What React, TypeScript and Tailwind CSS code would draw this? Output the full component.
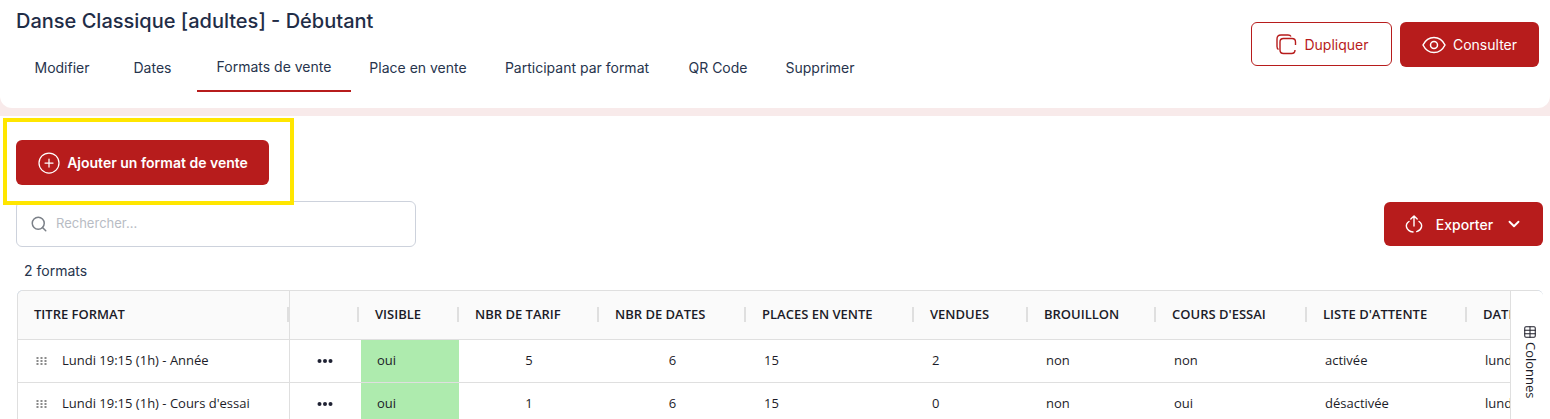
import { ChevronDown, CirclePlus, Search, Table } from "lucide-react";

const uiFont = "font-['Inter','Liberation_Sans',sans-serif]";
const tableFont = "font-['Open_Sans','Noto_Sans',sans-serif]";
const gridCols =
  "grid-cols-[272px_69px_100px_140px_147px_168px_114px_128px_151px_160px_120px]";

const tabs = [
  { label: "Modifier", width: "w-[92px]" },
  { label: "Dates", width: "w-[89px]" },
  { label: "Formats de vente", width: "w-[154px]", active: true },
  { label: "Place en vente", width: "w-[134px]" },
  { label: "Participant par format", width: "w-[184px]" },
  { label: "QR Code", width: "w-[98px]" },
  { label: "Supprimer", width: "w-[106px]" },
];

const headers = [
  "TITRE FORMAT",
  "",
  "VISIBLE",
  "NBR DE TARIF",
  "NBR DE DATES",
  "PLACES EN VENTE",
  "VENDUES",
  "BROUILLON",
  "COURS D'ESSAI",
  "LISTE D'ATTENTE",
  "DATE",
];

const rows = [
  {
    title: "Lundi 19:15 (1h) - Année",
    tarifs: "5",
    dates: "6",
    places: "15",
    vendues: "2",
    brouillon: "non",
    essai: "non",
    attente: "activée",
  },
  {
    title: "Lundi 19:15 (1h) - Cours d'essai",
    tarifs: "1",
    dates: "6",
    places: "15",
    vendues: "0",
    brouillon: "non",
    essai: "oui",
    attente: "désactivée",
  },
];

function DuplicateIcon() {
  return (
    <svg width="24" height="24" viewBox="0 0 24 24" fill="none" stroke="currentColor" strokeWidth="1.4">
      <path d="M4.5 17.5c-1-.6-1.5-1.6-1.5-3V7c0-2.500 1.500-4 4-4h7c1.500 0 2.500.5 3 1.500" />
      <path d="M18 6.500h-8.500c-2 0-3.500 1.500-3.500 3.500v8c0 2 1.500 3.500 3.500 3.500h8c2 0 3.500-1.500 3.500-3.500" />
      <path d="M18 6.500c2 0 3.500 1.500 3.500 3.500v3" />
    </svg>
  );
}

function EyeIcon() {
  return (
    <svg width="24" height="24" viewBox="0 0 24 24" fill="none" stroke="currentColor" strokeWidth="1.5">
      <path d="M1 12c2.500-5 6.500-7.500 11-7.500S20.500 7 23 12c-2.500 5-6.500 7.500-11 7.500S3.500 17 1 12z" />
      <circle cx="12" cy="12" r="3.500" />
    </svg>
  );
}

function ExportIcon() {
  return (
    <svg width="20" height="20" viewBox="0 0 20 20" fill="none" stroke="currentColor" strokeWidth="1.4" strokeLinecap="round">
      <path d="M10 12V2M6.800 5 10 2l3.200 3" />
      <path d="M5 7.500C2.800 9 2 11 2.500 13c.8 3 3.800 5 7.500 5s6.700-2 7.500-5c.5-2-.3-4-2.500-5.500" strokeDasharray="15 3.500" />
    </svg>
  );
}

function DragDots() {
  return (
    <svg width="12" height="8" viewBox="0 0 12 8" fill="#8a8a8a">
      {[1, 4, 7].map((y) =>
        [1.500, 5.500, 9.500].map((x) => <rect key={`${x}-${y}`} x={x} y={y - 1} width="2" height="2" />),
      )}
    </svg>
  );
}

function MoreDots() {
  return (
    <svg width="16" height="4" viewBox="0 0 16 4" fill="#1f2233">
      <circle cx="2.500" cy="2" r="2" />
      <circle cx="8" cy="2" r="2" />
      <circle cx="13.500" cy="2" r="2" />
    </svg>
  );
}

function Cell({ children, center }: { children: React.ReactNode; center?: boolean }) {
  return <div className={`flex items-center px-[18px] ${center ? "justify-center" : ""}`}>{children}</div>;
}

export default function App() {
  return (
    <div className={`relative h-[419px] w-[1550px] overflow-hidden bg-white ${uiFont}`}>
      <div className="bg-[#f8eaea] pb-2">
        <header className="flex h-[108px] justify-between rounded-b-xl bg-white pl-4 pr-[11px]">
          <div>
            <h1 className="mt-[9px] h-6 text-[20px] leading-6 font-medium text-[#1f2d47]">
              Danse Classique [adultes] - Débutant
            </h1>
            <nav className="mt-[10px] flex">
              {tabs.map((tab) => (
                <div
                  key={tab.label}
                  className={`flex h-[49px] items-center justify-center text-[14px] whitespace-nowrap text-[#27344d] ${tab.width} ${
                    tab.active ? "border-b-2 border-[#b71c1c]" : ""
                  }`}
                >
                  {tab.label}
                </div>
              ))}
            </nav>
          </div>
          <div className="mt-[22px] flex items-start gap-2">
            <button className="flex h-[44px] w-[141px] items-center justify-center gap-[6px] rounded-md border border-[#b71c1c] bg-white text-[14px] text-[#b71c1c]">
              <DuplicateIcon />
              Dupliquer
            </button>
            <button className="flex h-[45px] w-[139px] items-center justify-center gap-[7px] rounded-md bg-[#b71c1c] text-[14px] text-white">
              <EyeIcon />
              Consulter
            </button>
          </div>
        </header>
      </div>

      <main className="px-4 pt-6">
        <button className="flex h-[45px] w-[253px] items-center justify-center gap-[6px] rounded-md bg-[#b71c1c] text-[14px] font-semibold text-white">
          <CirclePlus size={24} strokeWidth={1.25} />
          Ajouter un format de vente
        </button>

        <div className="mt-4 flex items-center justify-between pr-[-1px]">
          <div className="flex h-[46px] w-[400px] items-center gap-2 rounded-md border border-[#cdd2dc] px-[13px]">
            <Search size={18} strokeWidth={2} className="text-[#7b8088]" />
            <span className="text-[13px] text-[#b8bcc4]">Rechercher...</span>
          </div>
          <button className="mr-[-9px] flex h-[44px] w-[159px] items-center justify-center gap-3 rounded-md bg-[#b71c1c] text-[14px] font-medium text-white">
            <ExportIcon />
            Exporter
            <ChevronDown size={18} strokeWidth={2.5} />
          </button>
        </div>

        <p className="mt-[14px] pl-2 text-[14px] leading-5 text-[#27344d]">2 formats</p>

        <div className={`mt-[9px] ml-px flex w-[1526px] rounded-t-md bg-[#bcd7f7] text-[13px] text-[#1c1c28] ${tableFont}`}>
          <div className="flex flex-1 overflow-hidden rounded-t-md border-t border-l border-[#dfdfdf] bg-white">
            <div className="flex-1 overflow-hidden">
              <div className={`grid h-[49px] border-b border-[#dfdfdf] bg-[#fafafa] font-semibold ${gridCols}`}>
                {headers.map((header, index) => (
                  <div
                    key={header || "actions"}
                    className={`relative flex items-center px-[16px] whitespace-nowrap ${index === 0 ? "border-r border-[#dfdfdf]" : ""}`}
                  >
                    {header}
                    {index < headers.length - 1 ? (
                      <span className="absolute top-[16px] right-0 h-[15px] w-[2px] bg-[#dfdfdf]" />
                    ) : null}
                  </div>
                ))}
              </div>
              {rows.map((row) => (
                <div key={row.title} className={`grid h-[43px] border-b border-[#dfdfdf] ${gridCols}`}>
                  <div className="flex items-center gap-[15px] border-r border-[#dfdfdf] pl-[17px] whitespace-nowrap">
                    <DragDots />
                    {row.title}
                  </div>
                  <Cell center>
                    <MoreDots />
                  </Cell>
                  <div className="ml-[2px] flex items-center bg-[#aeebae] pl-4">oui</div>
                  <Cell center>{row.tarifs}</Cell>
                  <Cell center>{row.dates}</Cell>
                  <Cell>{row.places}</Cell>
                  <Cell>{row.vendues}</Cell>
                  <Cell>{row.brouillon}</Cell>
                  <Cell>{row.essai}</Cell>
                  <Cell>{row.attente}</Cell>
                  <Cell>lundi</Cell>
                </div>
              ))}
            </div>
            <div className="h-[130px] w-[33px] shrink-0 border-l border-[#dfdfdf] bg-white">
              <div className="mt-[34px] flex items-center gap-[3px] pl-[9px] text-[13px] [writing-mode:vertical-rl]">
                <Table size={14} strokeWidth={1.75} />
                Colonnes
              </div>
            </div>
          </div>
        </div>
      </main>

      {/* highlight drawn over the page */}
      <div className="absolute top-[118px] left-[3px] h-[87px] w-[291px] border-4 border-[#ffe600]" />
    </div>
  );
}
